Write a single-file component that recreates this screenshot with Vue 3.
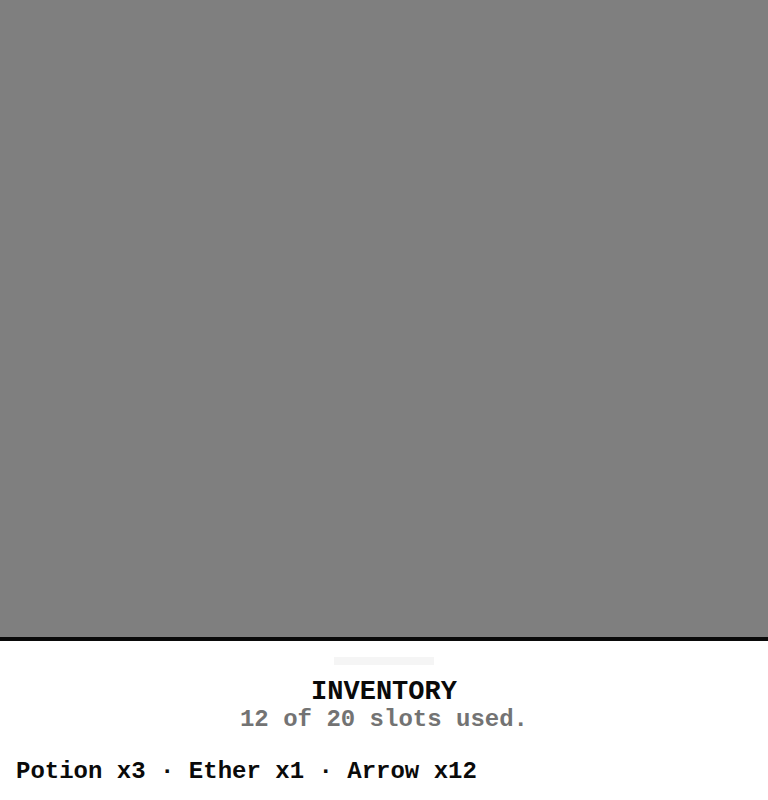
<template>
  <div class="overlay">
    <section class="drawer" role="dialog" aria-modal="true" aria-labelledby="drawer-title" aria-describedby="drawer-description">
      <div class="drawer-handle"></div>

      <!-- Title and slot count -->
      <header class="drawer-header">
        <h2 id="drawer-title">INVENTORY</h2>
        <p id="drawer-description">{{ usedSlots }} of {{ totalSlots }} slots used.</p>
      </header>

      <!-- Carried items -->
      <p class="drawer-items">{{ itemList }}</p>
    </section>
  </div>
</template>

<script setup>
  import { ref, computed } from 'vue';

  const usedSlots = ref(12);
  const totalSlots = ref(20);

  const items = ref([
    { name: 'Potion', amount: 3 },
    { name: 'Ether', amount: 1 },
    { name: 'Arrow', amount: 12 },
  ]);

  // All items on one line, separated by a dot
  const itemList = computed(() =>
    items.value.map(item => `${item.name} x${item.amount}`).join(' · ')
  );
</script>

<style>
  body {
    margin: 0;
    background-color: #ffffff;
  }
</style>

<style scoped>
  .overlay {
    display: flex;
    flex-direction: column;
    justify-content: flex-end;
    min-height: 100vh;
    background-color: rgba(0, 0, 0, 0.5);
    font-family: "Liberation Mono", monospace;
  }

  .drawer {
    border-top: 4px solid #0a0a0a;
    background-color: #ffffff;
    color: #0a0a0a;
  }

  .drawer-handle {
    width: 100px;
    height: 8px;
    margin: 16px auto 0;
    background-color: #f5f5f5;
  }

  .drawer-header {
    padding: 13px 16px 24px;
    text-align: center;
  }

  .drawer-header h2 {
    margin: 0;
    font-size: 27px;
    font-weight: bold;
    line-height: 28px;
  }

  .drawer-header p {
    margin: 0;
    color: #737373;
    font-size: 24px;
    font-weight: bold;
    line-height: 28px;
  }

  .drawer-items {
    margin: 0;
    padding: 0 16px 14px;
    font-size: 24px;
    font-weight: bold;
    line-height: 28px;
  }
</style>
